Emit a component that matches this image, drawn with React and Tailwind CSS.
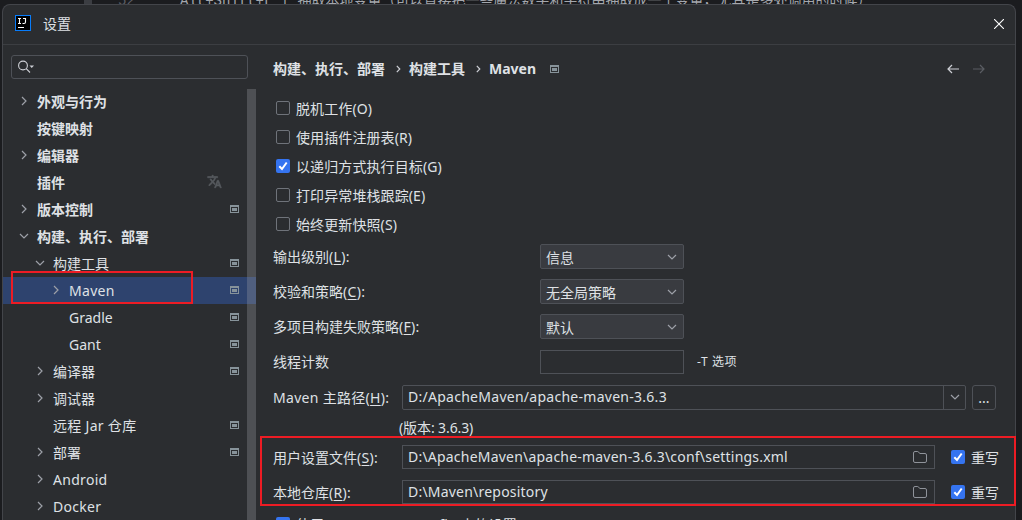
import React from "react";

const CJK = "font-['Noto_Sans','Noto_Sans_CJK_SC',sans-serif]";

function Chevron({ dir = "right", className = "" }) {
  return (
    <svg width="10" height="10" viewBox="0 0 10 10" fill="none" stroke="#9da0a8" strokeWidth="1.2" className={className}>
      <path d={dir === "right" ? "M3 1L7 5L3 9" : "M1 3L5 7L9 3"} />
    </svg>
  );
}

function Separator() {
  return (
    <svg width="5" height="8" viewBox="0 0 5 8" fill="none" stroke="#ced0d6" strokeWidth="1.2" className="mr-[8px] ml-[11px] -mt-[1px]">
      <path d="M.8 .8L3.8 4L.8 7.2" />
    </svg>
  );
}

function ProjectIcon() {
  return (
    <svg width="9" height="8" viewBox="0 0 9 8" className="shrink-0">
      <path d="M0 0H9V8H0ZM1 2V7H8V2Z" fill="#87939a" fillRule="evenodd" />
      <rect x="2" y="3" width="5" height="3" fill="#87939a" />
    </svg>
  );
}

function TranslateIcon() {
  return (
    <svg width="15" height="15" viewBox="0 0 24 24" fill="#565a5e" stroke="#565a5e" strokeWidth="1" className="mr-[17px] -mt-[2px]">
      <path d="M12.87 15.07l-2.54-2.51.03-.03A17.52 17.52 0 0 0 14.07 6H17V4h-7V2H8v2H1v1.99h11.17C11.5 7.92 10.44 9.75 9 11.35 8.07 10.32 7.3 9.19 6.69 8h-2c.73 1.63 1.73 3.17 2.98 4.56l-5.09 5.02L4 19l5-5 3.11 3.11.76-2.04zM18.5 10h-2L12 22h2l1.12-3h4.75L21 22h2l-4.5-12zm-2.62 7l1.62-4.33L19.12 17h-3.24z" />
    </svg>
  );
}

const TREE = [
  { label: "外观与行为", level: 0, arrow: "right", bold: true },
  { label: "按键映射", level: 0, bold: true },
  { label: "编辑器", level: 0, arrow: "right", bold: true },
  { label: "插件", level: 0, bold: true, translate: true },
  { label: "版本控制", level: 0, arrow: "right", bold: true, project: true },
  { label: "构建、执行、部署", level: 0, arrow: "down", bold: true },
  { label: "构建工具", level: 1, arrow: "down", project: true },
  { label: "Maven", level: 2, arrow: "right", project: true, selected: true, latin: true },
  { label: "Gradle", level: 2, project: true },
  { label: "Gant", level: 2, project: true },
  { label: "编译器", level: 1, arrow: "right", project: true },
  { label: "调试器", level: 1, arrow: "right" },
  { label: "远程 Jar 仓库", level: 1, project: true, latin: true },
  { label: "部署", level: 1, arrow: "right", project: true },
  { label: "Android", level: 1, arrow: "right", latin: true },
  { label: "Docker", level: 1, arrow: "right", latin: true },
];

const INDENT = ["pl-[16px]", "pl-[32px]", "pl-[48px]"];

function TreeRow({ item }) {
  return (
    <div className={`flex h-[27px] shrink-0 items-center pr-[17px] ${INDENT[item.level]} ${item.selected ? "bg-[#2e436e]" : ""}`}>
      <span className="flex w-[18px] shrink-0 -mt-[2px]">{item.arrow && <Chevron dir={item.arrow} />}</span>
      <span className={`grow ${item.bold ? "font-bold" : ""} ${item.latin ? "tracking-[0.3px]" : ""}`}>{item.label}</span>
      {item.translate && <TranslateIcon />}
      {item.project && <span className="-mt-[2px]"><ProjectIcon /></span>}
    </div>
  );
}

function Check({ on }) {
  return on ? (
    <svg width="14" height="14" viewBox="0 0 14 14" className="shrink-0">
      <rect width="14" height="14" rx="2" fill="#3574f0" />
      <path d="M3.3 7.2L6 10L10.7 3.5" fill="none" stroke="white" strokeWidth="2" />
    </svg>
  ) : (
    <span className="size-[14px] shrink-0 rounded-[2px] border border-[#6f737a]" />
  );
}

function CheckRow({ on, children }) {
  return (
    <div className="flex h-[29px] items-center gap-[6px] pl-[19px] tracking-[0.1px]">
      <Check on={on} />
      <span className="translate-y-px">{children}</span>
    </div>
  );
}

function Label({ text, mnemonic, className = "" }) {
  return (
    <span className={className}>
      {text}
      {mnemonic && <span className="tracking-[0.3px]">(<span className="underline underline-offset-2">{mnemonic}</span>):</span>}
    </span>
  );
}

function Select({ children }) {
  return (
    <div className="flex h-[25px] w-[144px] items-center justify-between rounded-[2px] border border-[#4e5157] bg-[#393b40] pr-[6px] pl-[5px]">
      <span className="translate-y-px">{children}</span>
      <Chevron dir="down" />
    </div>
  );
}

function Folder() {
  return (
    <svg width="14" height="12" viewBox="0 0 14 12" fill="none" stroke="#8f939a" className="shrink-0">
      <path d="M.5 2Q.5.5 2 .5H4.800L7 2.500H12Q13.500 2.500 13.500 4V10Q13.500 11.500 12 11.500H2Q.5 11.500.5 10Z" />
    </svg>
  );
}

function PathRow({ text, mnemonic, value }) {
  return (
    <div className="flex h-[35px] items-center pl-[16px]">
      <div className="flex w-[129px]"><Label text={text} mnemonic={mnemonic} className="translate-y-px" /></div>
      <div className="flex h-[24px] w-[533px] items-center justify-between border border-[#4e5157] pr-[7px] pl-[5px]">
        <span className="tracking-[0.21px]">{value}</span>
        <Folder />
      </div>
      <div className="ml-[16px] flex items-center gap-[6px]">
        <Check on />
        <span className="translate-y-px">重写</span>
      </div>
    </div>
  );
}

export default function App() {
  return (
    <div className={`relative flex h-[520px] w-[1022px] flex-col overflow-hidden bg-[#1b1c1f] text-[14px] leading-[20px] whitespace-pre text-[#dfe1e5] ${CJK}`}>
      <div className="flex h-[4px] shrink-0 overflow-hidden font-['Liberation_Mono','Noto_Sans_CJK_SC',monospace] text-[#a4a7ad]">
        <div className="ml-[84px] h-[4px] w-[8px] bg-[#3b3d42]" />
        <div className="ml-[26px] w-[62px] -mt-[9px] text-[#5b5e65]">52</div>
        <div className="-mt-[9px]">Alt+Shift+L | 抽取本地变量（可以直接把一些魔法数字和字符串抽取成一个变量，尤其是多处调用的时候）</div>
      </div>

      <div className="ml-[2px] flex h-[516px] w-[1014px] shrink-0 flex-col rounded-t-[8px] border border-b-0 border-[#43454a] bg-[#2b2d30]">
        <header className="flex h-[40px] shrink-0 items-center border-b border-[#3c3e42] pr-[11px] pb-[3px] pl-[12px]">
          <svg width="16" height="16" viewBox="0 0 16 16" fill="none">
            <rect x=".5" y=".5" width="15" height="15" fill="#000" stroke="#087cfa" />
            <path d="M3 3.5H6M4.5 3.5V8.5M3 8.5H6M8 3.5H10.5V7Q10.5 8.5 9 8.5H7.5M3 12.5H9" stroke="#fff" strokeWidth="1.1" />
          </svg>
          <span className="ml-[12px] grow translate-y-px">设置</span>
          <svg width="10" height="10" viewBox="0 0 10 10" stroke="#fff" strokeWidth="1.1" className="translate-y-px"><path d="M0 0L10 10M10 0L0 10" /></svg>
        </header>

        <div className="flex min-h-0 grow">
          <aside className="flex w-[253px] shrink-0 flex-col">
            <div className="mt-[10px] ml-[8px] flex h-[24px] w-[237px] shrink-0 items-center rounded-[3px] border border-[#4e5157] pl-[6px]">
              <svg width="17" height="14" viewBox="0 0 17 14" fill="none" stroke="#ced0d6" strokeWidth="1.1">
                <circle cx="5" cy="5.5" r="4.4" />
                <path d="M8.2 8.7L12 12.5" />
                <path d="M11.500 5.500H16L13.750 8Z" fill="#ced0d6" stroke="none" />
              </svg>
            </div>
            <div className="mt-[9px] flex min-h-0 grow">
              <div className="relative flex w-[253px] flex-col overflow-hidden">
                {TREE.map((item) => <TreeRow key={item.label} item={item} />)}
                <div className="absolute top-px right-0 h-full w-[9px] bg-[#a0a3a8]/30" />
              </div>
            </div>
          </aside>

          <main className="flex w-[759px] shrink-0 flex-col">
            <div className="mt-[12px] flex h-[24px] shrink-0 items-center pl-[17px] font-bold">
              <span>构建、执行、部署</span>
              <Separator />
              <span>构建工具</span>
              <Separator />
              <span>Maven</span>
              <span className="ml-[14px] grow"><ProjectIcon /></span>
              <svg width="38" height="10" viewBox="0 0 38 10" fill="none" strokeWidth="1.2" className="mr-[30px]">
                <path d="M12 5H1M5 1L1 5L5 9" stroke="#ced0d6" />
                <path d="M26 5H37M33 1L37 5L33 9" stroke="#5a5d63" />
              </svg>
            </div>

            <div className="mt-[12px] flex shrink-0 flex-col pl-[1px]">
              <CheckRow>脱机工作(O)</CheckRow>
              <CheckRow>使用插件注册表(R)</CheckRow>
              <CheckRow on>以递归方式执行目标(G)</CheckRow>
              <CheckRow>打印异常堆栈跟踪(E)</CheckRow>
              <CheckRow>始终更新快照(S)</CheckRow>
            </div>

            <div className="mt-px grid shrink-0 auto-rows-[35px] grid-cols-[267px_1fr] items-center pl-[17px]">
              <Label text="输出级别" mnemonic="L" />
              <Select>信息</Select>
              <Label text="校验和策略" mnemonic="C" />
              <Select>无全局策略</Select>
              <Label text="多项目构建失败策略" mnemonic="F" />
              <Select>默认</Select>
              <Label text="线程计数" />
              <div className="flex items-center">
                <div className="h-[24px] w-[144px] border border-[#4e5157]" />
                <span className="ml-[13px] text-[12px] tracking-[0.6px]">-T 选项</span>
              </div>
            </div>

            <div className="flex h-[36px] shrink-0 items-center pl-[17px]">
              <div className="flex w-[129px]"><Label text="Maven 主路径" mnemonic="H" className="translate-y-px tracking-[0.3px]" /></div>
              <div className="flex h-[25px] w-[564px] items-center rounded-[2px] border border-[#4e5157] pl-[5px]">
                <span className="grow tracking-[0.27px]">D:/ApacheMaven/apache-maven-3.6.3</span>
                <span className="flex h-full w-[22px] items-center justify-center border-l border-[#4e5157]"><Chevron dir="down" /></span>
              </div>
              <div className="ml-[6px] flex h-[25px] w-[24px] items-center justify-center rounded-[3px] border border-[#4e5157]"><span className="translate-y-px">...</span></div>
            </div>
            <div className="flex h-[24px] shrink-0 items-center pl-[143px]"><span className="translate-y-px tracking-[-0.1px]">(版本: 3.6.3)</span></div>

            <div className="flex shrink-0 flex-col pl-[1px]">
              <PathRow text="用户设置文件" mnemonic="S" value={"D:\\ApacheMaven\\apache-maven-3.6.3\\conf\\settings.xml"} />
              <PathRow text="本地仓库" mnemonic="R" value={"D:\\Maven\\repository"} />
            </div>
            <div className="flex shrink-0 flex-col pl-[1px]">
              <CheckRow on>使用 .mvn/maven.config 中的设置</CheckRow>
            </div>
          </main>
        </div>
      </div>

      <div className="absolute top-[271px] left-[11px] h-[33px] w-[182px] border-2 border-[#ed1c24]" />
      <div className="absolute top-[436px] left-[260px] h-[70px] w-[756px] border-2 border-[#ed1c24]" />
    </div>
  );
}
